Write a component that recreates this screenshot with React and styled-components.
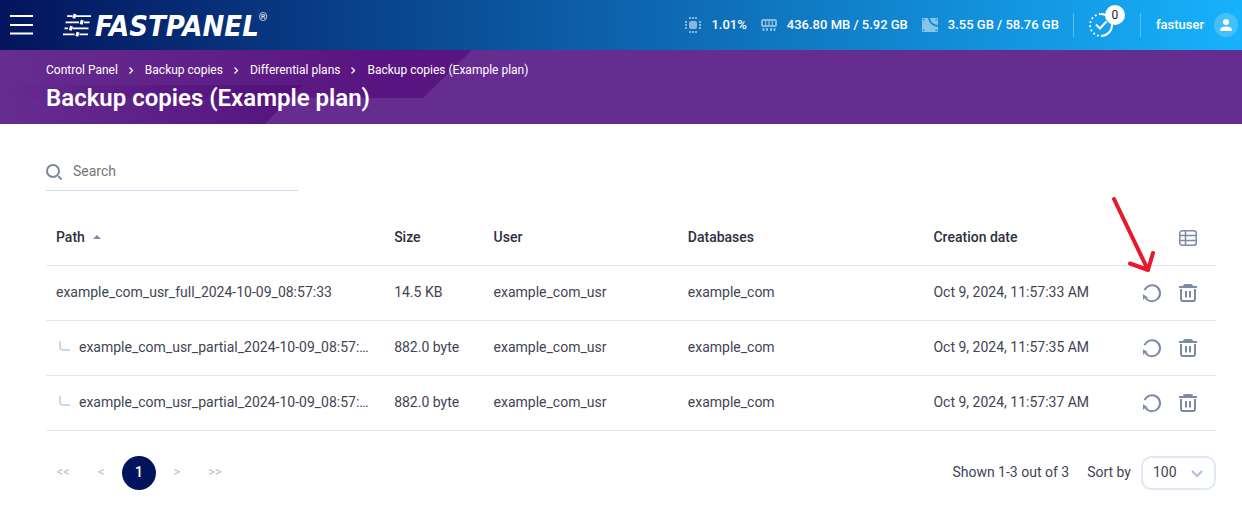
import React, { useState } from 'react';
import styled, { createGlobalStyle } from 'styled-components';

const GlobalStyle = createGlobalStyle`
  *, *::before, *::after {
    box-sizing: border-box;
  }

  body {
    margin: 0;
    background: #fff;
    color: #424454;
    font-family: Roboto, sans-serif;
    font-size: 14px;
    line-height: 20px;
  }

  button, input, select {
    font: inherit;
    color: inherit;
  }

  button {
    padding: 0;
    border: 0;
    background: none;
    cursor: pointer;
  }

  a {
    color: inherit;
    text-decoration: none;
  }

  svg {
    display: block;
    flex: none;
  }
`;

const TopBar = styled.header`
  display: flex;
  align-items: center;
  height: 50px;
  padding: 0 4px 0 10px;
  background: linear-gradient(90deg, #03145c 0%, #17b2fd 100%);
  color: #fff;
`;

const Logo = styled.a`
  display: flex;
  align-items: center;
  margin-left: 30px;
`;

const LogoText = styled.span`
  margin-left: 3px;
  padding-top: 2px;
  font-family: 'DejaVu Sans Condensed', 'DejaVu Sans', sans-serif;
  font-size: 29px;
  line-height: 32px;
  font-weight: 700;
  font-style: italic;
`;

const Registered = styled.span`
  align-self: flex-start;
  font-size: 11px;
  line-height: 20px;
`;

const Stats = styled.ul`
  display: flex;
  gap: 14px;
  margin: 0 14px 0 auto;
  padding: 0;
  list-style: none;
`;

const Stat = styled.li`
  display: flex;
  align-items: center;
  gap: 10px;
  font-size: 13px;
  font-weight: 500;

  svg {
    opacity: 0.5;
  }
`;

const Tasks = styled.button`
  position: relative;
  display: flex;
  align-items: center;
  justify-content: center;
  width: 68px;
  height: 24px;
  padding-right: 12px;
  border: solid rgba(255, 255, 255, 0.3);
  border-width: 0 1px;
`;

const TasksBadge = styled.span`
  position: absolute;
  top: -8px;
  left: 31px;
  width: 20px;
  height: 20px;
  border-radius: 50%;
  background: #fff;
  color: #222;
  font-size: 12px;
  line-height: 20px;
  text-align: center;
`;

const UserLink = styled.a`
  display: flex;
  align-items: center;
  gap: 10px;
  margin-left: 15px;
  font-size: 13px;
  font-weight: 500;
`;

const Hero = styled.section`
  position: relative;
  height: 74px;
  padding: 10px 46px 0;
  background: #662d91;
  color: #fff;
`;

const HeroPattern = styled.svg`
  position: absolute;
  top: 0;
  left: 0;
`;

const Breadcrumbs = styled.nav`
  position: relative;
  display: flex;
  align-items: center;
  gap: 10px;
  font-size: 12px;
`;

const Title = styled.h1`
  position: relative;
  margin: 2px 0 0;
  font-size: 24px;
  line-height: 32px;
  font-weight: 600;
`;

const Content = styled.main`
  padding: 28px 26px 39px 46px;
`;

const SearchBox = styled.label`
  display: flex;
  align-items: center;
  gap: 10px;
  width: 252px;
  height: 39px;
  border-bottom: 1px solid #cfdcf0;
`;

const SearchInput = styled.input`
  flex: 1;
  min-width: 0;
  padding: 0;
  border: 0;
  outline: 0;

  &::placeholder {
    color: #757575;
  }
`;

const Table = styled.table`
  width: 100%;
  margin-top: 20px;
  table-layout: fixed;
  border-collapse: separate;
  border-spacing: 0;
`;

const Col = styled.col`
  width: ${({ $width }) => $width};
`;

const HeadCell = styled.th`
  height: 55px;
  padding: 0 10px 2px;
  border-bottom: 1px solid #dfe8f1;
  color: #2d2f40;
  font-weight: 500;
  text-align: left;
`;

const Cell = styled.td`
  height: 55px;
  padding: 0 10px 2px;
  border-bottom: 1px solid #dfe8f1;
`;

const SortButton = styled.button`
  display: flex;
  align-items: center;
  gap: 8px;
`;

const PathCell = styled.div`
  display: flex;
  align-items: center;
  gap: 9px;
  padding-left: ${({ $nested }) => ($nested ? '3px' : '0')};
  margin-right: ${({ $nested }) => ($nested ? '4px' : '0')};

  span {
    overflow: hidden;
    white-space: nowrap;
    text-overflow: ellipsis;
  }
`;

const Actions = styled.div`
  display: flex;
  justify-content: flex-end;
  gap: 16px;
  padding: 1px 8px 0 0;
  color: #7c8aa5;
`;

const Footer = styled.footer`
  display: flex;
  align-items: center;
  justify-content: space-between;
  margin-top: 25px;
`;

const Pagination = styled.nav`
  display: flex;
  align-items: center;
`;

const PageButton = styled.button`
  width: 38px;
  height: 34px;
  padding-right: 4px;
  padding-bottom: 2px;
  color: #b4bac6;
  font-size: 13px;
`;

const CurrentPage = styled.button`
  width: 34px;
  height: 34px;
  margin: 0 4px 0 0;
  padding-bottom: 2px;
  border-radius: 50%;
  background: #03145c;
  color: #fff;
  font-weight: 500;
`;

const PageSize = styled.div`
  display: flex;
  align-items: center;
  gap: 10px;

  > span, > label {
    padding-bottom: 2px;
  }
`;

const Shown = styled.span`
  margin-right: 8px;
`;

const SelectWrap = styled.div`
  position: relative;

  svg {
    position: absolute;
    top: 14px;
    right: 13px;
    pointer-events: none;
  }
`;

const Select = styled.select`
  width: 75px;
  height: 34px;
  padding: 0 10px 2px;
  border: 2px solid #dfe9f3;
  border-radius: 10px;
  background: #fff;
  appearance: none;
`;

const Pointer = styled.svg`
  position: absolute;
  top: 195px;
  right: 87px;
  pointer-events: none;
`;

const Page = styled.div`
  position: relative;
`;

const MenuIcon = () => (
  <svg width="23" height="20" fill="none" stroke="#fff" strokeWidth="2">
    <path d="M0 1h23M0 10h23M0 18.5h23" />
  </svg>
);

const LogoIcon = () => (
  <svg width="29" height="24" viewBox="0 0 29 24" fill="none" stroke="#fff">
    <path
      strokeWidth="1.8"
      d="M4 3.200h5.500M13 3.200h15M2.500 9.300h13.500M21 9.300h5.500M1.500 15.300h3.500M9.500 15.300h16M0 21.300h11.500M16.500 21.300h8.500"
    />
    <path strokeWidth="3" d="M12 1l-1.200 4.300M19.300 7.200l-1.200 4.200M8.500 13.200l-1.200 4.200M15 19.200l-1.200 4.200" />
  </svg>
);

const CpuIcon = () => (
  <svg width="16" height="16" fill="#fff">
    <rect x="4" y="4" width="8" height="8" rx="2" />
    <path d="M4 0h2v2H4zM7 0h2v2H7zM10 0h2v2h-2zM4 14h2v2H4zM7 14h2v2H7zM10 14h2v2h-2zM0 4h2v2H0zM0 7h2v2H0zM0 10h2v2H0zM14 4h2v2h-2zM14 7h2v2h-2zM14 10h2v2h-2z" />
  </svg>
);

const RamIcon = () => (
  <svg width="16" height="12" fill="#fff">
    <path
      fillRule="evenodd"
      d="M2 0h12q2 0 2 2v4q0 2-2 2H2Q0 8 0 6V2Q0 0 2 0zM2 2v4h2V2zM5.300 2v4h2V2zM8.700 2v4h2V2zM12 2v4h2V2z"
    />
    <path d="M1.500 9h2v3h-2zM5 9h2v3H5zM9 9h2v3H9zM12.500 9h2v3h-2z" />
  </svg>
);

const DiskIcon = () => (
  <svg width="16" height="14" fill="#fff">
    <path
      fillRule="evenodd"
      d="M1 0h5q1 7.500 10 9v4q0 1-1 1H1q-1 0-1-1V1Q0 0 1 0zM1 1v1.500h1.500V1zM1 11.500V13h1.500v-1.500zM13.500 11.500V13H15v-1.500z"
    />
    <path fillRule="evenodd" d="M8 0h7q1 0 1 1v6Q9 6 8 0zM13.500 1v1.500H15V1z" />
  </svg>
);

const TasksIcon = () => (
  <svg width="24" height="24" fill="none" stroke="#fff" strokeWidth="2">
    <path d="M12 1a11 11 0 0 1 0 22" />
    <path
      d="M12 23A11 11 0 0 1 12 1"
      strokeLinecap="round"
      strokeDasharray="0.1 4.200"
      strokeDashoffset="-3"
    />
    <path d="M7 11.500l4 4 6.500-7" />
  </svg>
);

const UserIcon = () => (
  <svg width="24" height="24" fill="#fff">
    <circle cx="12" cy="12" r="12" opacity="0.2" />
    <circle cx="12" cy="9" r="3" />
    <path d="M6 16.500q1-3 6-3t6 3q0 1.500-1.500 1.500h-9Q6 18 6 16.500z" />
  </svg>
);

const CrumbArrow = () => (
  <svg width="7" height="8" fill="none" stroke="#fff" strokeWidth="1.3">
    <path d="M1.500 1.500l3 3-3 3" />
  </svg>
);

const SearchIcon = () => (
  <svg width="17" height="17" fill="none" stroke="#7686a5" strokeWidth="2">
    <circle cx="7" cy="8" r="6" />
    <path d="M12.300 13.300l3.400 3.200" />
  </svg>
);

const SortIcon = () => (
  <svg width="8" height="4" fill="#7c8aa5">
    <path d="M0 4l4-4 4 4z" />
  </svg>
);

const ColumnsIcon = () => (
  <svg width="20" height="18" viewBox="0 0 20 18" fill="none" stroke="currentColor" strokeWidth="1.500">
    <rect x="1.750" y="1.750" width="16.500" height="14.500" rx="2.500" />
    <path d="M1.500 6.500h17M1.500 11.500h17M7.500 1.500v15" />
  </svg>
);

const RestoreIcon = () => (
  <svg width="20" height="20" fill="none" stroke="currentColor" strokeWidth="2">
    <path d="M2.600 7.200A8 8 0 1 1 3.600 15" />
    <path d="M1 11.200l5 3-3 .8-2 2z" fill="currentColor" stroke="none" />
  </svg>
);

const TrashIcon = () => (
  <svg width="20" height="20" fill="none" stroke="currentColor" strokeWidth="2">
    <path d="M1 4h18" />
    <path d="M5 3q0-2 2.500-2h5Q15 1 15 3z" fill="currentColor" stroke="none" />
    <path d="M3 6v10q0 2 2 2h10q2 0 2-2V6" />
    <path d="M8 8v6.500M12 8v6.500" />
  </svg>
);

const BranchIcon = () => (
  <svg width="11" height="13" fill="none" stroke="#cdd8e6" strokeWidth="2">
    <path d="M1 0v6q0 3 3 3h7" />
  </svg>
);

const SelectArrow = () => (
  <svg width="12" height="8" fill="none" stroke="#b0bdd8" strokeWidth="2">
    <path d="M1 1l5 5 5-5" />
  </svg>
);

const crumbs = ['Control Panel', 'Backup copies', 'Differential plans', 'Backup copies (Example plan)'];

const columnWidths = ['28.9%', '8.5%', '16.6%', '21%', '17%', '8%'];

const backups = [
  {
    path: 'example_com_usr_full_2024-10-09_08:57:33',
    size: '14.5 KB',
    date: 'Oct 9, 2024, 11:57:33 AM'
  },
  {
    path: 'example_com_usr_partial_2024-10-09_08:57:35',
    size: '882.0 byte',
    date: 'Oct 9, 2024, 11:57:35 AM',
    nested: true
  },
  {
    path: 'example_com_usr_partial_2024-10-09_08:57:37',
    size: '882.0 byte',
    date: 'Oct 9, 2024, 11:57:37 AM',
    nested: true
  }
];

const BackupRow = ({ backup }) => (
  <tr>
    <Cell>
      <PathCell $nested={backup.nested}>
        {backup.nested && <BranchIcon />}
        <span>{backup.path}</span>
      </PathCell>
    </Cell>
    <Cell>{backup.size}</Cell>
    <Cell>example_com_usr</Cell>
    <Cell>example_com</Cell>
    <Cell>{backup.date}</Cell>
    <Cell>
      <Actions>
        <button type="button" aria-label="Restore"><RestoreIcon /></button>
        <button type="button" aria-label="Delete"><TrashIcon /></button>
      </Actions>
    </Cell>
  </tr>
);

const App = () => {
  const [search, setSearch] = useState('');
  const [pageSize, setPageSize] = useState('100');

  return (
    <Page>
      <GlobalStyle />
      <TopBar>
        <button type="button" aria-label="Menu"><MenuIcon /></button>
        <Logo href="#">
          <LogoIcon />
          <LogoText>FASTPANEL</LogoText>
          <Registered>®</Registered>
        </Logo>
        <Stats>
          <Stat><CpuIcon />1.01%</Stat>
          <Stat><RamIcon />436.80 MB / 5.92 GB</Stat>
          <Stat><DiskIcon />3.55 GB / 58.76 GB</Stat>
        </Stats>
        <Tasks type="button" aria-label="Tasks">
          <TasksIcon />
          <TasksBadge>0</TasksBadge>
        </Tasks>
        <UserLink href="#">fastuser<UserIcon /></UserLink>
      </TopBar>

      <Hero>
        <HeroPattern width="480" height="74">
          <defs>
            <linearGradient id="heroWide">
              <stop offset="0" stopColor="#57127f" stopOpacity="0" />
              <stop offset="0.8" stopColor="#57127f" stopOpacity="0.9" />
            </linearGradient>
            <linearGradient id="heroLow">
              <stop offset="0" stopColor="#520f7b" stopOpacity="0" />
              <stop offset="1" stopColor="#520f7b" stopOpacity="0.85" />
            </linearGradient>
          </defs>
          <path d="M0 0h472l-49 48H0z" fill="url(#heroWide)" />
          <path d="M0 35h303l-38 39H0z" fill="url(#heroLow)" />
        </HeroPattern>
        <Breadcrumbs aria-label="Breadcrumbs">
          {crumbs.map((crumb, index) => (
            <React.Fragment key={crumb}>
              {index > 0 && <CrumbArrow />}
              <a href="#">{crumb}</a>
            </React.Fragment>
          ))}
        </Breadcrumbs>
        <Title>Backup copies (Example plan)</Title>
      </Hero>

      <Content>
        <SearchBox>
          <SearchIcon />
          <SearchInput
            type="text"
            aria-label="Search"
            placeholder="Search"
            value={search}
            onChange={(e) => setSearch(e.target.value)}
          />
        </SearchBox>

        <Table>
          <colgroup>
            {columnWidths.map((width, index) => <Col key={index} $width={width} />)}
          </colgroup>
          <thead>
            <tr>
              <HeadCell><SortButton type="button">Path<SortIcon /></SortButton></HeadCell>
              <HeadCell>Size</HeadCell>
              <HeadCell>User</HeadCell>
              <HeadCell>Databases</HeadCell>
              <HeadCell>Creation date</HeadCell>
              <HeadCell>
                <Actions>
                  <button type="button" aria-label="Columns"><ColumnsIcon /></button>
                </Actions>
              </HeadCell>
            </tr>
          </thead>
          <tbody>
            {backups
              .filter((backup) => backup.path.includes(search))
              .map((backup) => <BackupRow key={backup.path} backup={backup} />)}
          </tbody>
        </Table>

        <Footer>
          <Pagination aria-label="Pages">
            <PageButton type="button">&lt;&lt;</PageButton>
            <PageButton type="button">&lt;</PageButton>
            <CurrentPage type="button">1</CurrentPage>
            <PageButton type="button">&gt;</PageButton>
            <PageButton type="button">&gt;&gt;</PageButton>
          </Pagination>
          <PageSize>
            <Shown>Shown 1-3 out of 3</Shown>
            <label htmlFor="page-size">Sort by</label>
            <SelectWrap>
              <Select id="page-size" value={pageSize} onChange={(e) => setPageSize(e.target.value)}>
                <option>25</option>
                <option>50</option>
                <option>100</option>
              </Select>
              <SelectArrow />
            </SelectWrap>
          </PageSize>
        </Footer>
      </Content>

      <Pointer width="44" height="78" fill="none" stroke="#e8192c" strokeWidth="4" strokeLinecap="round" strokeLinejoin="round">
        <path d="M3 4L37 75M19 68.500L37 75 42 58" />
      </Pointer>
    </Page>
  );
};

export default App;
